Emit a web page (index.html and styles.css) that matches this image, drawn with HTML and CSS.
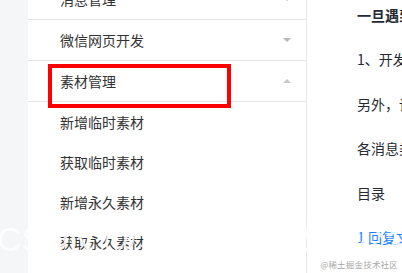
FILE: index.html
```html
<!DOCTYPE html>
<html lang="zh-CN">

<head>
  <meta charset="UTF-8">
  <meta name="viewport" content="width=device-width, initial-scale=1.0">
  <title>素材管理</title>
  <link rel="stylesheet" href="styles.css">
</head>

<body>
  <div class="page">
    <!-- 左侧灰色边 -->
    <div class="side-gap"></div>

    <!-- 侧边菜单 -->
    <ul class="menu">
      <li class="menu-title">
        <span>消息管理</span>
        <i class="arrow arrow-down"></i>
      </li>
      <li class="menu-title">
        <span>微信网页开发</span>
        <i class="arrow arrow-down"></i>
      </li>
      <li class="menu-title menu-open">
        <span>素材管理</span>
        <i class="arrow arrow-up"></i>
        <!-- 红框标注 -->
        <div class="mark-box"></div>
      </li>
      <li class="sub-item">新增临时素材</li>
      <li class="sub-item">获取临时素材</li>
      <li class="sub-item">新增永久素材</li>
      <li class="sub-item">获取永久素材</li>
    </ul>

    <!-- 正文区域 -->
    <div class="article">
      <p class="strong">一旦遇到问题，请先查看文档</p>
      <p>1、开发者在调用接口时需要注意</p>
      <p>另外，请注意素材的大小限制</p>
      <p>各消息类型的说明如下</p>
      <p>目录</p>
      <p class="link">1 回复文本消息</p>
    </div>
  </div>

  <!-- 水印 -->
  <div class="watermark">CSDN @素材管理 微信公众号开发</div>
  <div class="site-mark">@稀土掘金技术社区</div>
</body>

</html>
```

FILE: styles.css
```css
/* 全局重置 */
* {
  margin: 0;
  padding: 0;
  box-sizing: border-box;
}

body {
  width: 402px;
  height: 273px;
  overflow: hidden;
  position: relative;
  background: #FFFFFF;
  color: #333;
  font-family: "Noto Sans CJK SC", "Noto Sans", sans-serif;
  font-size: 14px;
}

.page {
  display: flex;
  height: 100%;
}

/* 左侧灰色边 */
.side-gap {
  width: 28px;
  flex-shrink: 0;
  background: #F5F6F7;
}

/* 侧边菜单 */
.menu {
  width: 279px;
  flex-shrink: 0;
  list-style: none;
  margin-top: -21px;
  border-right: 1px solid #E4E6EB;
}

.menu-title {
  position: relative;
  height: 41px;
  display: flex;
  align-items: center;
  justify-content: space-between;
  padding: 0 15px 0 32px;
  border-bottom: 1px solid #E4E6EB;
  color: #333;
}

/* 小三角 */
.arrow {
  width: 0;
  height: 0;
  border-left: 4px solid transparent;
  border-right: 4px solid transparent;
}

.arrow-down {
  border-top: 4px solid #B5B8BE;
}

.arrow-up {
  border-bottom: 4px solid #C4C7CC;
}

/* 红框标注 */
.mark-box {
  position: absolute;
  left: 20px;
  top: 3px;
  width: 183px;
  height: 44px;
  border: 4px solid #FF0000;
}

.sub-item {
  height: 40px;
  line-height: 40px;
  padding-left: 32px;
  color: #333;
}

/* 正文 */
.article {
  flex: 1;
  min-width: 0;
  overflow: hidden;
  padding: 3px 0 0 50px;
  color: #252933;
}

.article p {
  white-space: nowrap;
  line-height: 24px;
  margin-bottom: 20.4px;
}

.article .strong {
  font-weight: 700;
}

.article .link {
  color: #1E80FF;
}

/* 水印 */
.watermark {
  position: absolute;
  left: -3px;
  top: 219px;
  font-family: "Liberation Sans", "Noto Sans CJK SC", sans-serif;
  font-size: 34px;
  line-height: 40px;
  white-space: nowrap;
  color: rgba(255, 255, 255, 0.85);
}

.site-mark {
  position: absolute;
  right: 4px;
  bottom: 3px;
  font-size: 8.5px;
  color: #A8A8A8;
  letter-spacing: 0.2px;
}
```
